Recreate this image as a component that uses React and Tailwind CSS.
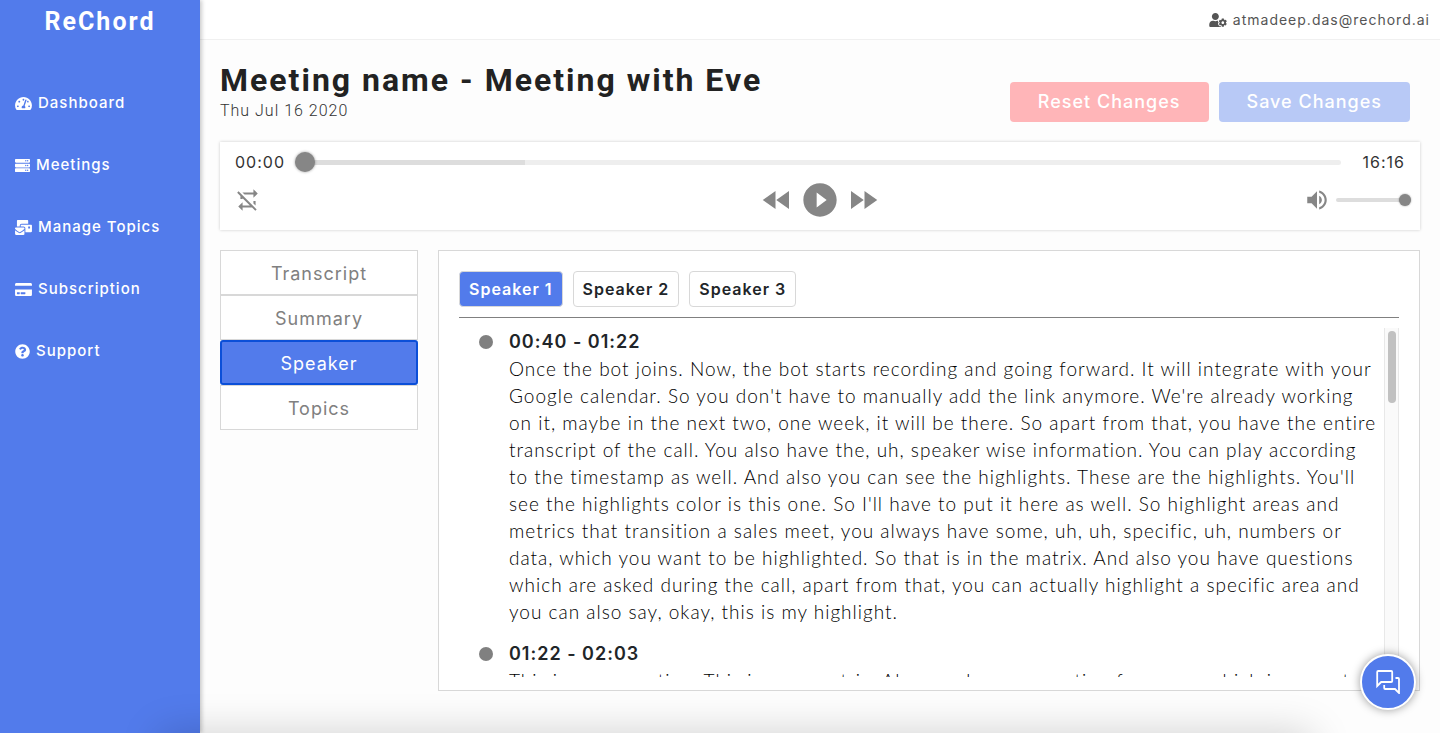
import React, { useState } from 'react';
import { FaTachometerAlt, FaServer, FaMailBulk, FaCreditCard, FaQuestionCircle, FaUserCog } from 'react-icons/fa';
import { MdFastRewind, MdFastForward, MdPlayCircleFilled } from 'react-icons/md';

const navItems = [
  { label: 'Dashboard', icon: FaTachometerAlt, size: 'h-[15px] w-[17px]' },
  { label: 'Meetings', icon: FaServer, size: 'size-[15px]' },
  { label: 'Manage Topics', icon: FaMailBulk, size: 'h-[15px] w-[17px]' },
  { label: 'Subscription', icon: FaCreditCard, size: 'h-[15px] w-[17px]' },
  { label: 'Support', icon: FaQuestionCircle, size: 'size-[15px]' },
];

const tabs = ['Transcript', 'Summary', 'Speaker', 'Topics'];
const speakers = ['Speaker 1', 'Speaker 2', 'Speaker 3'];

const segments = [
  {
    time: '00:40 - 01:22',
    text: `Once the bot joins. Now, the bot starts recording and going forward. It will integrate with your
Google calendar. So you don't have to manually add the link anymore. We're already working
on it, maybe in the next two, one week, it will be there. So apart from that, you have the entire
transcript of the call. You also have the, uh, speaker wise information. You can play according
to the timestamp as well. And also you can see the highlights. These are the highlights. You'll
see the highlights color is this one. So I'll have to put it here as well. So highlight areas and
metrics that transition a sales meet, you always have some, uh, uh, specific, uh, numbers or
data, which you want to be highlighted. So that is in the matrix. And also you have questions
which are asked during the call, apart from that, you can actually highlight a specific area and
you can also say, okay, this is my highlight.`,
  },
  {
    time: '01:22 - 02:03',
    text: 'This is your meeting. This is your matrix. Also you have a question for areas, which is a great',
  },
];

function Sidebar() {
  return (
    <aside className="z-10 w-[200px] shrink-0 bg-[#527beb] text-white shadow-[2px_0_4px_rgba(0,0,0,0.2)]">
      <div className="pt-1 text-center font-[Roboto] text-[25px] leading-9 font-bold tracking-[2px]">ReChord</div>
      <nav className="mt-12 flex flex-col gap-8 pl-[15px]">
        {navItems.map(({ label, icon: Icon, size }) => (
          <a key={label} href="#" className="flex h-[30px] items-center gap-[6px] text-[15px] font-medium">
            <Icon className={size} />
            {label}
          </a>
        ))}
      </nav>
    </aside>
  );
}

function Player() {
  return (
    <section className="mt-5 h-[88px] bg-white px-[15px] pt-[10px] text-[#868686] shadow-[0_0_3px_rgba(0,0,0,0.2)]">
      <div className="flex h-5 items-center text-base text-[#333]">
        <span>00:00</span>
        <input
          type="range"
          aria-label="Progress"
          min="0"
          max="976"
          defaultValue="0"
          className="mr-[22px] ml-[10px] h-[5px] min-w-0 flex-1 appearance-none rounded-full bg-[linear-gradient(to_right,#dddddd_22%,#eeeeee_22%)] [&::-webkit-slider-thumb]:size-5 [&::-webkit-slider-thumb]:appearance-none [&::-webkit-slider-thumb]:rounded-full [&::-webkit-slider-thumb]:bg-[#868686] [&::-webkit-slider-thumb]:shadow-[0_0_3px_rgba(0,0,0,0.4)]"
        />
        <span>16:16</span>
      </div>
      <div className="mt-2 grid h-10 grid-cols-3 items-center">
        <button aria-label="Loop" className="justify-self-start">
          <svg viewBox="0 0 24 24" className="size-[26px] fill-current">
            <path d="M2,5.27L3.28,4L20,20.72L18.73,22L15.73,19H7V22L3,18L7,14V17H13.73L7,10.27V11H5V8.27L2,5.27M17,13H19V17.18L17,15.18V13M17,5V2L21,6L17,10V7H8.82L6.82,5H17Z" />
          </svg>
        </button>
        <div className="flex items-center justify-center gap-[5px]">
          <button aria-label="Rewind"><MdFastRewind className="size-9" /></button>
          <button aria-label="Play"><MdPlayCircleFilled className="size-10" /></button>
          <button aria-label="Forward"><MdFastForward className="size-9" /></button>
        </div>
        <div className="-mr-[6px] flex items-center justify-end gap-[6px]">
          <button aria-label="Mute">
            <svg viewBox="0 0 24 24" className="size-[26px] fill-current">
              <path d="M14,3.23V5.29C16.89,6.15 19,8.83 19,12C19,15.17 16.89,17.84 14,18.7V20.77C18,19.86 21,16.28 21,12C21,7.72 18,4.14 14,3.23M16.5,12C16.5,10.23 15.5,8.71 14,7.97V16C15.5,15.29 16.5,13.76 16.5,12M3,9V15H7L12,20V4L7,9H3Z" />
            </svg>
          </button>
          <input
            type="range"
            aria-label="Volume"
            defaultValue="100"
            className="h-1 w-[75px] appearance-none rounded-full bg-[#dddddd] [&::-webkit-slider-thumb]:size-3 [&::-webkit-slider-thumb]:appearance-none [&::-webkit-slider-thumb]:rounded-full [&::-webkit-slider-thumb]:bg-[#868686] [&::-webkit-slider-thumb]:shadow-[0_0_2px_rgba(0,0,0,0.4)]"
          />
        </div>
      </div>
    </section>
  );
}

function App() {
  const [activeTab, setActiveTab] = useState('Speaker');
  const [activeSpeaker, setActiveSpeaker] = useState('Speaker 1');

  return (
    <div className="relative flex h-screen overflow-hidden bg-[#fdfdfd] font-[Inter,sans-serif] tracking-[1px] text-[#212529]">
      <Sidebar />
      <div className="flex min-w-0 flex-1 flex-col">
        <header className="flex h-10 shrink-0 items-center justify-end border-b border-[#f0f0f0] bg-white pr-[10px]">
          <a href="#" className="flex items-center gap-[6px] text-sm text-[#555]">
            <FaUserCog className="h-[14px] w-[18px]" />
            atmadeep.das@rechord.ai
          </a>
        </header>
        <main className="flex min-h-0 flex-1 flex-col px-5 pt-5 pb-[42px]">
          <div className="flex items-end justify-between pr-[10px]">
            <div>
              <h1 className="font-[Roboto] text-[32px] leading-10 font-bold tracking-[2px] text-[#222]">Meeting name - Meeting with Eve</h1>
              <p className="font-[Roboto] text-base leading-[22px] font-light text-[#333]">Thu Jul 16 2020</p>
            </div>
            <div className="flex gap-[10px] text-lg font-medium text-white">
              <button className="h-10 rounded bg-[#ffb5b8] px-7">Reset Changes</button>
              <button className="h-10 rounded bg-[#b8c9f6] px-7">Save Changes</button>
            </div>
          </div>
          <Player />
          <div className="mt-5 flex min-h-0 flex-1 gap-5">
            <div className="flex w-[198px] shrink-0 flex-col text-lg">
              {tabs.map((tab) => (
                <button
                  key={tab}
                  onClick={() => setActiveTab(tab)}
                  className={
                    tab === activeTab
                      ? 'h-[45px] rounded-[3px] border-2 border-[#0b4fd8] bg-[#527beb] pt-[2px] text-white'
                      : 'h-[45px] border border-[#d8d8d8] bg-white pt-[2px] text-[#808080]'
                  }
                >
                  {tab}
                </button>
              ))}
            </div>
            <section className="flex min-w-0 flex-1 flex-col border border-[#d8d8d8] bg-white px-5 pt-5 pb-[13px]">
              <div className="flex shrink-0 gap-[10px] border-b border-[#808080] pb-[10px]">
                {speakers.map((speaker) => (
                  <button
                    key={speaker}
                    onClick={() => setActiveSpeaker(speaker)}
                    className={`h-9 rounded border border-[#d8d8d8] px-[9px] text-base font-semibold ${
                      speaker === activeSpeaker ? 'bg-[#527beb] text-white' : 'bg-white'
                    }`}
                  >
                    {speaker}
                  </button>
                ))}
              </div>
              <div className="mt-[10px] flex min-h-0 flex-1">
                <ul className="min-w-0 flex-1 overflow-hidden pl-5">
                  {segments.map((segment) => (
                    <li key={segment.time} className="mb-[15px] flex gap-4">
                      <span className="mt-[7px] size-[14px] shrink-0 rounded-full bg-[#808080]" />
                      <div className="min-w-0 flex-1">
                        <h2 className="text-lg leading-[27px] font-semibold">{segment.time}</h2>
                        <p className="font-[Lato] text-[19px] leading-[27px] font-light whitespace-pre-line text-black">
                          {segment.text}
                        </p>
                      </div>
                    </li>
                  ))}
                </ul>
                <div className="w-[15px] shrink-0 border-x border-[#e8e8e8] bg-[#fafafa] px-[3px] pt-[3px]">
                  <div className="h-[72px] w-2 rounded-full bg-[#c1c1c1]" />
                </div>
              </div>
            </section>
          </div>
        </main>
      </div>
      <button
        aria-label="Chat"
        className="absolute right-6 bottom-[23px] z-20 flex size-14 items-center justify-center rounded-full border-2 border-white bg-[#527beb] text-white shadow-[0_0_10px_rgba(0,0,0,0.4)]"
      >
        <svg viewBox="0 0 24 24" className="size-6 fill-none stroke-current stroke-[1.8]">
          <path d="M1.2 16V2q0-1 1-1h13q1 0 1 1v9q0 1-1 1H5.2z" />
          <path d="M8.2 15v3q0 1 1 1h9.800l4 4V9q0-1-1-1h-2.500" />
        </svg>
      </button>
      <div className="pointer-events-none absolute right-32 -bottom-20 left-40 z-10 h-20 shadow-[0_0_40px_rgba(0,0,0,0.18)]" />
    </div>
  );
}

export default App;
